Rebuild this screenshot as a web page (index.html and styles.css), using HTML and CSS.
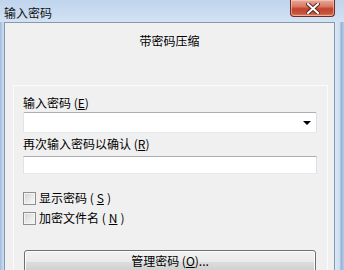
FILE: index.html
```html
<!DOCTYPE html>
<html lang="zh-CN">
<head>
    <meta charset="UTF-8">
    <title>输入密码</title>
    <link rel="stylesheet" href="styles.css">
</head>
<body>
    <div class="window">
        <div class="titlebar">
            <span class="title">输入密码</span>
            <button class="close-btn">
                <svg width="14" height="11" viewBox="0 0 14 11">
                    <path d="M2 1 L12 10 M12 1 L2 10" stroke="#5a2a22" stroke-width="4" stroke-linecap="square"/>
                    <path d="M2 1 L12 10 M12 1 L2 10" stroke="#ffffff" stroke-width="2" stroke-linecap="square"/>
                </svg>
            </button>
        </div>

        <div class="frame">
            <div class="client">
                <div class="heading">带密码压缩</div>

                <div class="panel">
                    <label class="field-label">输入密码 (<u>E</u>)</label>
                    <div class="combo">
                        <span class="combo-arrow"></span>
                    </div>

                    <label class="field-label second">再次输入密码以确认 (<u>R</u>)</label>
                    <div class="textbox"></div>

                    <div class="checks">
                        <label class="check-row"><span class="checkbox"></span>显示密码 (<u>S</u>)</label>
                        <label class="check-row"><span class="checkbox"></span>加密文件名 (<u>N</u>)</label>
                    </div>

                    <button class="button">管理密码 (<u>O</u>)...</button>
                </div>
            </div>
            <div class="frame-right"></div>
        </div>
    </div>
</body>
</html>
```

FILE: styles.css
```css
html, body {
    margin: 0;
    padding: 0;
}
body {
    width: 344px;
    height: 270px;
    overflow: hidden;
    font-family: "Noto Sans CJK SC", "Liberation Sans", sans-serif;
    font-size: 12px;
    color: #000;
}
.window {
    display: flex;
    flex-direction: column;
    height: 270px;
    background: linear-gradient(to right, #9fbbdd 0, #c7d9ee 3px, #cbdcf0 100%);
}
.titlebar {
    height: 26px;
    display: flex;
    align-items: flex-start;
    justify-content: space-between;
    background: linear-gradient(to bottom, #bfd4ed 0%, #cadcf1 60%, #d3e3f4 100%);
}
.title {
    padding: 4px 0 0 4px;
    line-height: 18px;
    font-size: 12px;
    color: #111;
}
.close-btn {
    width: 45px;
    height: 17px;
    margin-right: 9px;
    padding: 0;
    border: 1px solid #6e2b22;
    border-top: none;
    border-radius: 0 0 4px 4px;
    background: linear-gradient(to bottom, #e9a99a 0%, #d97a66 40%, #c4432c 55%, #c8553c 85%, #e08a6c 100%);
    box-shadow: inset 0 0 0 1px rgba(255, 220, 210, 0.5);
    display: flex;
    align-items: center;
    justify-content: center;
}
.frame {
    flex: 1;
    display: flex;
    padding-left: 4px;
}
.client {
    width: 330px;
    background: #f0f0f0;
    border: 1px solid #8798ad;
    border-bottom: none;
}
.frame-right {
    width: 9px;
    background: linear-gradient(to right, #dce8f5 0, #cbdcf0 5px, #8fb0d6 6px, #b6cde9 9px);
}
.heading {
    text-align: center;
    line-height: 16px;
    padding-top: 10px;
    height: 52px;
}
.panel {
    margin-left: 8px;
    width: 304px;
    padding: 9px 0 0 9px;
    border: 1px solid #fbfbfb;
    border-bottom: none;
    display: flex;
    flex-direction: column;
    align-items: flex-start;
}
.field-label {
    line-height: 16px;
}
.field-label.second {
    margin-top: 3px;
}
.combo {
    margin-top: 1px;
    width: 292px;
    height: 19px;
    background: #fff;
    border: 1px solid #abadb3;
    border-color: #abadb3 #dbdfe6 #e3e9ef #e2e3ea;
    border-radius: 2px;
    position: relative;
}
.combo-arrow {
    position: absolute;
    right: 5px;
    top: 8px;
    width: 0;
    height: 0;
    border-left: 4px solid transparent;
    border-right: 4px solid transparent;
    border-top: 4px solid #000;
}
.textbox {
    margin-top: 4px;
    width: 292px;
    height: 16px;
    background: #fff;
    border: 1px solid #abadb3;
    border-color: #abadb3 #dbdfe6 #e3e9ef #e2e3ea;
}
.checks {
    margin-top: 16px;
    display: flex;
    flex-direction: column;
    gap: 4px;
}
.check-row {
    display: flex;
    align-items: center;
    line-height: 16px;
    gap: 3px;
}
.checkbox {
    width: 11px;
    height: 11px;
    border: 1px solid #8e8f8f;
    background: linear-gradient(135deg, #d3d3d3 0%, #ececec 60%, #f8f8f8 100%);
    box-shadow: inset 0 0 0 1px #f4f4f4;
}
.button {
    margin: 24px 0 0 1px;
    width: 292px;
    height: 23px;
    padding: 0;
    font-family: inherit;
    font-size: 12px;
    line-height: 16px;
    color: #000;
    border: 1px solid #707070;
    border-radius: 3px;
    background: linear-gradient(to bottom, #f2f2f2 0%, #ebebeb 50%, #dddddd 51%, #cfcfcf 100%);
    box-shadow: inset 0 0 0 1px #fcfcfc;
    display: flex;
    justify-content: center;
    padding-top: 2px;
}
```
